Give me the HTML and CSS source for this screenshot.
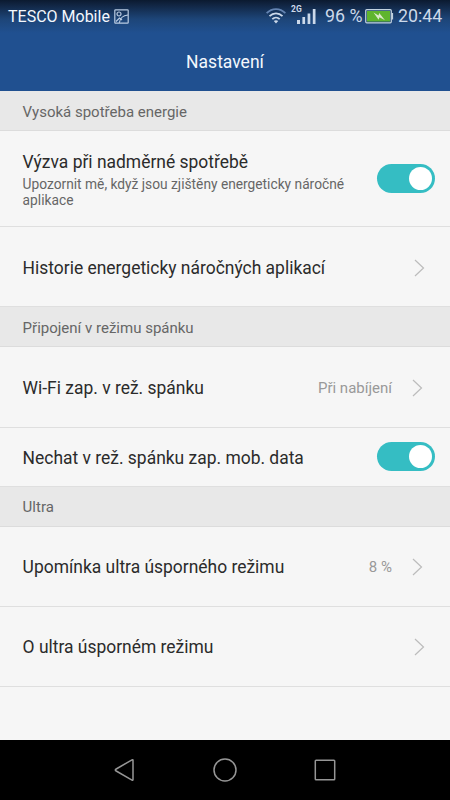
FILE: index.html
```html
<!DOCTYPE html>
<html lang="cs">
<head>
<meta charset="utf-8">
<title>Nastavení</title>
<link rel="stylesheet" href="styles.css">
</head>
<body>
<div class="screen">
  <header class="header">
    <div class="status">
      <span class="carrier">TESCO Mobile</span>
      <svg class="picture" width="15" height="15" viewBox="0 0 15 15" fill="none" stroke="#b9cbe2" stroke-width="1.2"><rect x=".8" y=".8" width="13.4" height="13.4" rx=".8"/><circle cx="5" cy="5" r="2"/><path d="M2 12.5 5.5 9 8 11M5.3 13.8C6 9.5 9 6.4 14 6"/></svg>
      <svg class="wifi" width="20" height="16" viewBox="0 0 20 16" fill="none" stroke="#ccd9ea" stroke-width="1.8"><path stroke="#6484b2" d="M.6 5.2C6-.2 14-.2 19.4 5.2"/><path d="M3.5 8.2C7.3 4.4 12.7 4.4 16.5 8.2M6.3 11.2c2.2-2.2 5.2-2.2 7.4 0"/><path fill="#ccd9ea" stroke="none" d="m7.8 13.1 2.2 2.4 2.2-2.4q-2.2-1.8-4.4 0z"/></svg>
      <span class="signal"><span class="network">2G</span><svg width="19" height="16" viewBox="0 0 19 16" fill="#ccd9ea"><path d="M0 12h3v4H0zM5.4 9h2.7v7H5.4zM10.6 5.5h2.7V16h-2.7zM15.8 1h2.7v15h-2.7z"/></svg></span>
      <span class="percent">96 %</span>
      <svg class="battery" width="29" height="15" viewBox="0 0 29 15"><rect x=".7" y=".7" width="25.6" height="13.1" rx="1" fill="#234a72" stroke="#c2d2df" stroke-width="1.2"/><rect x="2" y="2" width="23" height="10.5" fill="#5fb52e"/><path fill="#c2d2df" d="M26.5 4h1.6v6.5h-1.6z"/><path fill="#dceacb" d="m8.5 3.6 5 2.8.7-2.4 5.8 7.2-5.5-3-.9 2.6z"/></svg>
      <span class="clock">20:44</span>
    </div>
    <h1 class="title">Nastavení</h1>
  </header>
  <main class="content">
    <h2 class="section">Vysoká spotřeba energie</h2>
    <div class="row row-detail">
      <div class="text"><div class="label">Výzva při nadměrné spotřebě</div><div class="desc">Upozornit mě, když jsou zjištěny energeticky náročné aplikace</div></div>
      <span class="toggle"><span class="knob"></span></span>
    </div>
    <div class="row row-history">
      <div class="label">Historie energeticky náročných aplikací</div>
      <svg class="chevron" width="11" height="18" viewBox="0 0 11 18"><path d="m1 1 8.5 8L1 17"/></svg>
    </div>
    <h2 class="section">Připojení v režimu spánku</h2>
    <div class="row row-wifi">
      <div class="label">Wi-Fi zap. v rež. spánku</div>
      <span class="value">Při nabíjení</span>
      <svg class="chevron chevron-value" width="11" height="18" viewBox="0 0 11 18"><path d="m1 1 8.5 8L1 17"/></svg>
    </div>
    <div class="row row-data">
      <div class="label">Nechat v rež. spánku zap. mob. data</div>
      <span class="toggle"><span class="knob"></span></span>
    </div>
    <h2 class="section section-ultra">Ultra</h2>
    <div class="row">
      <div class="label">Upomínka ultra úsporného režimu</div>
      <span class="value">8 %</span>
      <svg class="chevron chevron-value" width="11" height="18" viewBox="0 0 11 18"><path d="m1 1 8.5 8L1 17"/></svg>
    </div>
    <div class="row">
      <div class="label">O ultra úsporném režimu</div>
      <svg class="chevron" width="11" height="18" viewBox="0 0 11 18"><path d="m1 1 8.5 8L1 17"/></svg>
    </div>
  </main>
  <nav class="nav">
    <svg width="24" height="24" viewBox="0 0 24 24"><path d="M3.2 11 19 1.8q1-.5 1 .5v19.3q0 1-1 .5L3.2 13q-1.8-1 0-2z"/></svg>
    <svg width="24" height="24" viewBox="0 0 24 24"><circle cx="12" cy="12" r="11"/></svg>
    <svg width="24" height="24" viewBox="0 0 24 24"><rect x="2.3" y="2.3" width="19.4" height="19.4" rx=".8"/></svg>
  </nav>
</div>
</body>
</html>
```

FILE: styles.css
```css
* { box-sizing: border-box; }
body { margin: 0; font-family: Roboto, "Noto Sans", sans-serif; }
.screen { width: 450px; height: 800px; display: flex; flex-direction: column; background: #f6f6f6; overflow: hidden; }
.header { height: 91px; flex: none; background: linear-gradient(#0b1a30 0, #10233f 4px, #1d4578 19px, #205090 33px); color: #f4f8fd; }
.status { height: 32px; display: flex; align-items: center; padding-left: 8px; font-size: 16px; line-height: 32px; white-space: nowrap; }
.status svg { display: block; flex: none; }
.carrier { width: 106px; padding-top: 1px; }
.wifi { margin-left: 137px; }
.signal { width: 30px; height: 32px; display: flex; align-items: center; justify-content: flex-end; position: relative; }
.network { position: absolute; left: 5px; top: 4px; font-size: 8.5px; line-height: 10px; font-weight: 700; color: #ccd9ea; }
.percent, .clock { color: #ccd9ea; font-size: 17.8px; }
.percent { width: 40px; margin-left: 9px; }
.clock { margin-left: 4px; }
.title { margin: 0; height: 59px; font-size: 17.5px; line-height: 60px; font-weight: 400; text-align: center; }
.content { height: 649px; flex: none; }
.section { margin: 0; height: 40px; padding-left: 22.6px; background: #e8e8e8; border-bottom: 1px solid #dcdcdc; font-size: 15px; line-height: 42px; font-weight: 400; color: #666; }
.section-ultra { line-height: 40px; }
.row { height: 80px; display: flex; align-items: center; padding: 1px 15px 0 22.6px; border-bottom: 1px solid #dfdfdf; }
.row-detail { height: 96px; padding-top: 0; }
.row-history { padding-top: 2px; }
.row-wifi { height: 81px; }
.row-data { height: 59px; padding: 0 15px 1px 22.6px; }
.row-data .label { padding-top: 2px; }
.text { width: 330px; }
.label { font-size: 17.45px; line-height: 24px; color: #2b2b2b; white-space: nowrap; }
.text .label { line-height: 26px; margin-top: -1px; }
.desc { padding-top: 1px; font-size: 13.75px; line-height: 16px; color: #666; }
.toggle { width: 58px; height: 29px; margin-left: auto; flex: none; padding: 3px; display: flex; justify-content: flex-end; border-radius: 15px; background: #35bdc3; }
.knob { width: 23px; height: 23px; border-radius: 50%; background: #fff; }
.chevron { margin-left: auto; margin-right: 10px; fill: none; stroke: #bcbcbc; stroke-width: 1.2; }
.value { margin-left: auto; font-size: 15px; color: #999; }
.chevron-value { margin-left: 20px; margin-right: 12px; }
.nav { height: 60px; flex: none; display: flex; align-items: center; justify-content: center; gap: 76px; background: #000; }
.nav svg { fill: none; stroke: #969696; stroke-width: 1.5; }
```
